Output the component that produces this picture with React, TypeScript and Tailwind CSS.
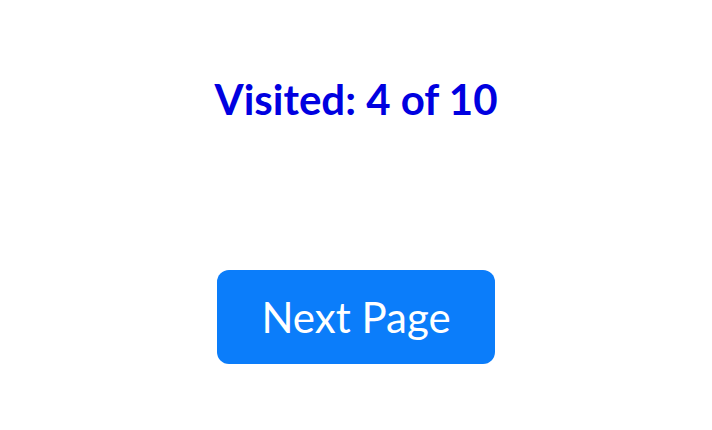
export default function App() {
  return (
    <div className="w-[712px] h-[430px] bg-white flex flex-col items-center" style={{ fontFamily: "Lato, 'Noto Sans', sans-serif" }}>
      <div className="mt-[71px] h-[56px] flex items-center text-[42px] font-bold leading-none text-[#0000e0]">
        Visited: 4 of 10
      </div>
      <button className="mt-[143px] w-[278px] h-[94px] rounded-[12px] bg-[#0b7dfa] text-white text-[42px] leading-none flex items-center justify-center">
        Next Page
      </button>
    </div>
  );
}
